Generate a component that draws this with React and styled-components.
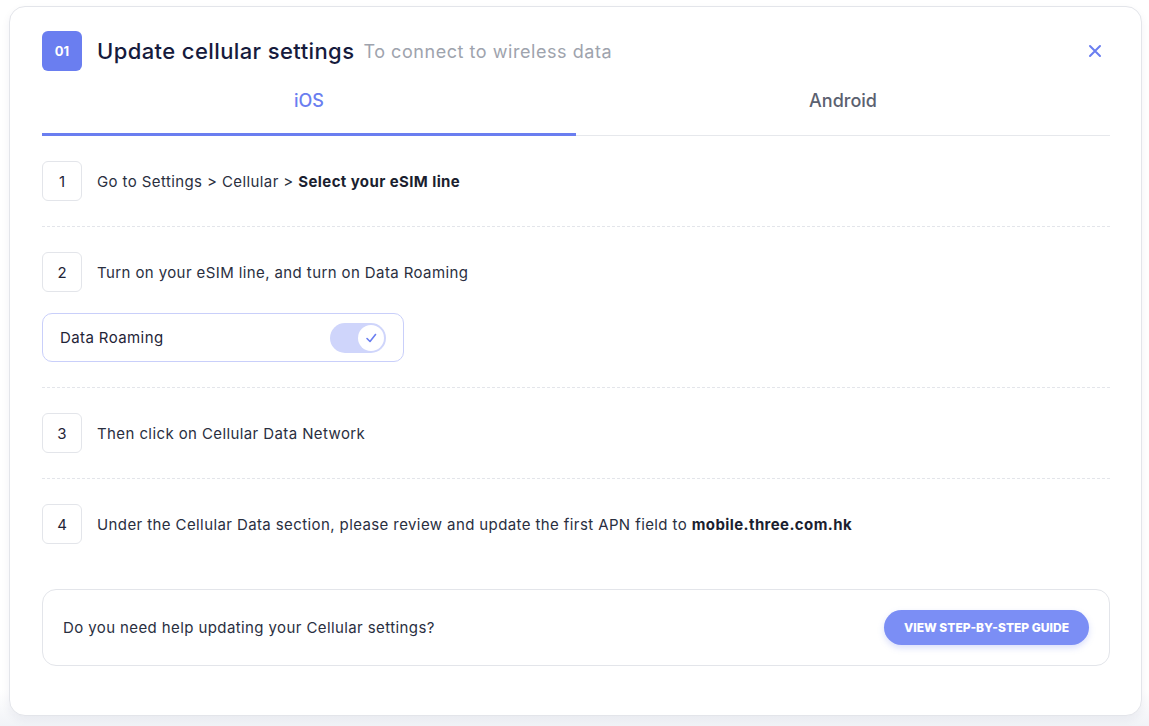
import React, { useState } from 'react';
import styled, { createGlobalStyle } from 'styled-components';

const GlobalStyle = createGlobalStyle`
  html, body {
    margin: 0;
    padding: 0;
    background: #ffffff;
    font-family: Inter, "Noto Sans", sans-serif;
    color: #1f2437;
  }
  * { box-sizing: border-box; }
`;

const Page = styled.div`
  padding: 6px 7px 10px 9px;
  background: linear-gradient(#ffffff 95%, #f1f3f7 100%);
`;

const Card = styled.div`
  background: #ffffff;
  border: 1px solid #e3e5ea;
  border-radius: 16px;
  box-shadow: 0 4px 10px rgba(30, 40, 80, 0.06);
  padding: 24px 31px 50px 32px;
  height: 710px;
`;

const Header = styled.div`
  display: flex;
  align-items: center;
  gap: 15px;
`;

const Badge = styled.div`
  width: 40px;
  height: 40px;
  border-radius: 6px;
  background: #6a7ef0;
  color: #ffffff;
  display: flex;
  align-items: center;
  justify-content: center;
  font-size: 13px;
  font-weight: 700;
`;

const Title = styled.h2`
  margin: 0;
  font-size: 22px;
  font-weight: 500;
  letter-spacing: 0.4px;
  color: #161b3d;
`;

const Subtitle = styled.span`
  font-size: 18px;
  letter-spacing: 0.55px;
  color: #9ea3ad;
  margin-left: -6px;
  margin-top: 1px;
`;

const CloseButton = styled.button`
  margin-left: auto;
  margin-right: 8px;
  background: none;
  border: none;
  padding: 0;
  cursor: pointer;
  display: flex;
`;

const Tabs = styled.div`
  display: grid;
  grid-template-columns: 1fr 1fr;
  border-bottom: 1px solid #e6e8ec;
  margin-top: 4px;
`;

const Tab = styled.button`
  background: none;
  border: none;
  font-family: inherit;
  font-size: 18px;
  font-weight: 500;
  line-height: 22px;
  color: ${p => (p.$active ? '#6a7ef0' : '#5b6170')};
  padding: 15px 0 21px;
  border-bottom: 3px solid ${p => (p.$active ? '#6a7ef0' : 'transparent')};
  margin-bottom: -1px;
  cursor: pointer;
`;

const Steps = styled.div`
  display: flex;
  flex-direction: column;
`;

const Step = styled.div`
  padding: 25px 0;
  border-bottom: ${p => (p.$last ? 'none' : '1px dashed #e3e5ea')};
  display: flex;
  flex-direction: column;
  gap: 21px;
`;

const StepRow = styled.div`
  display: flex;
  align-items: center;
  gap: 15px;
`;

const StepNumber = styled.div`
  width: 40px;
  height: 40px;
  border: 1px solid #e3e5ea;
  border-radius: 6px;
  display: flex;
  align-items: center;
  justify-content: center;
  font-size: 15px;
  color: #1f2437;
`;

const StepText = styled.div`
  font-size: 15px;
  letter-spacing: 0.4px;
  color: #2a2f3f;

  strong {
    font-weight: 700;
    color: #1b1f30;
  }
`;

const ToggleBox = styled.div`
  width: 362px;
  height: 49px;
  border: 1px solid #c9cffa;
  border-radius: 10px;
  display: flex;
  align-items: center;
  justify-content: space-between;
  padding: 0 17px 0 17px;
  font-size: 15px;
  letter-spacing: 0.4px;
  color: #1f2437;
`;

const Switch = styled.button`
  width: 56px;
  height: 30px;
  border-radius: 15px;
  border: none;
  padding: 2px;
  background: #cfd5fb;
  display: flex;
  justify-content: ${p => (p.$on ? 'flex-end' : 'flex-start')};
  cursor: pointer;
`;

const Knob = styled.span`
  width: 26px;
  height: 26px;
  border-radius: 50%;
  background: #ffffff;
  display: flex;
  align-items: center;
  justify-content: center;
`;

const HelpBox = styled.div`
  margin-top: 20px;
  border: 1px solid #e3e5ea;
  border-radius: 14px;
  height: 77px;
  display: flex;
  align-items: center;
  justify-content: space-between;
  padding: 0 20px 0 20px;
  font-size: 15px;
  letter-spacing: 0.4px;
  color: #2a2f3f;
`;

const GuideButton = styled.button`
  height: 35px;
  padding: 0 20px;
  border: none;
  border-radius: 18px;
  background: #7b8ef5;
  color: #ffffff;
  font-family: inherit;
  font-size: 12px;
  font-weight: 800;
  text-transform: uppercase;
  box-shadow: 0 3px 6px rgba(106, 126, 240, 0.25);
  cursor: pointer;
`;

const CloseIcon = () => (
  <svg width="14" height="14" viewBox="0 0 14 14">
    <path d="M2 2 L12 12 M12 2 L2 12" stroke="#6a7ef0" strokeWidth="2" strokeLinecap="round" />
  </svg>
);

const CheckIcon = () => (
  <svg width="12" height="12" viewBox="0 0 12 12">
    <path d="M2 6.5 L5 9.5 L10.5 2.5" stroke="#6a7ef0" strokeWidth="1.6" fill="none" strokeLinecap="round" strokeLinejoin="round" />
  </svg>
);

const App = () => {
  const [tab, setTab] = useState('ios');
  const [roaming, setRoaming] = useState(true);

  return (
    <Page>
      <GlobalStyle />
      <Card>
        <Header>
          <Badge>01</Badge>
          <Title>Update cellular settings</Title>
          <Subtitle>To connect to wireless data</Subtitle>
          <CloseButton aria-label="Close">
            <CloseIcon />
          </CloseButton>
        </Header>

        <Tabs>
          <Tab $active={tab === 'ios'} onClick={() => setTab('ios')}>iOS</Tab>
          <Tab $active={tab === 'android'} onClick={() => setTab('android')}>Android</Tab>
        </Tabs>

        <Steps>
          <Step>
            <StepRow>
              <StepNumber>1</StepNumber>
              <StepText>Go to Settings &gt; Cellular &gt; <strong>Select your eSIM line</strong></StepText>
            </StepRow>
          </Step>
          <Step>
            <StepRow>
              <StepNumber>2</StepNumber>
              <StepText>Turn on your eSIM line, and turn on Data Roaming</StepText>
            </StepRow>
            <ToggleBox>
              Data Roaming
              <Switch $on={roaming} onClick={() => setRoaming(!roaming)}>
                <Knob>{roaming && <CheckIcon />}</Knob>
              </Switch>
            </ToggleBox>
          </Step>
          <Step>
            <StepRow>
              <StepNumber>3</StepNumber>
              <StepText>Then click on Cellular Data Network</StepText>
            </StepRow>
          </Step>
          <Step $last>
            <StepRow>
              <StepNumber>4</StepNumber>
              <StepText>
                Under the Cellular Data section, please review and update the first APN field to <strong>mobile.three.com.hk</strong>
              </StepText>
            </StepRow>
          </Step>
        </Steps>

        <HelpBox>
          Do you need help updating your Cellular settings?
          <GuideButton>View step-by-step guide</GuideButton>
        </HelpBox>
      </Card>
    </Page>
  );
};

export default App;
